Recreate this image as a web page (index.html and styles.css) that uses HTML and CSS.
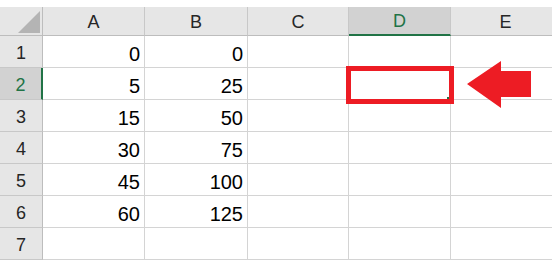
FILE: index.html
```html
<!DOCTYPE html>
<html lang="en">
<head>
  <meta charset="UTF-8">
  <title>Sheet</title>
  <link rel="stylesheet" href="styles.css">
</head>
<body>
  <div class="sheet">
    <div class="grid">
      <div class="corner"><span class="tri"></span></div>
      <div class="colhead">A</div>
      <div class="colhead">B</div>
      <div class="colhead">C</div>
      <div class="colhead sel">D</div>
      <div class="colhead">E</div>

      <div class="rowhead">1</div>
      <div class="cell">0</div><div class="cell">0</div><div class="cell"></div><div class="cell"></div><div class="cell"></div>

      <div class="rowhead sel">2</div>
      <div class="cell">5</div><div class="cell">25</div><div class="cell"></div><div class="cell"></div><div class="cell"></div>

      <div class="rowhead">3</div>
      <div class="cell">15</div><div class="cell">50</div><div class="cell"></div><div class="cell"></div><div class="cell"></div>

      <div class="rowhead">4</div>
      <div class="cell">30</div><div class="cell">75</div><div class="cell"></div><div class="cell"></div><div class="cell"></div>

      <div class="rowhead">5</div>
      <div class="cell">45</div><div class="cell">100</div><div class="cell"></div><div class="cell"></div><div class="cell"></div>

      <div class="rowhead">6</div>
      <div class="cell">60</div><div class="cell">125</div><div class="cell"></div><div class="cell"></div><div class="cell"></div>

      <div class="rowhead">7</div>
      <div class="cell"></div><div class="cell"></div><div class="cell"></div><div class="cell"></div><div class="cell"></div>
    </div>

    <!-- highlight on D2 -->
    <div class="mark"><span class="handle"></span></div>
    <svg class="arrow" width="66" height="48" viewBox="0 0 66 48">
      <polygon points="0,23 34,0 34,10 64,10 64,36 34,36 34,47" fill="#ed1c24"/>
    </svg>
  </div>
</body>
</html>
```

FILE: styles.css
```css
body {
  margin: 0;
  background: #ffffff;
  font-family: "Liberation Sans", Arial, sans-serif;
}

.sheet {
  position: relative;
  width: 552px;
  height: 263px;
  overflow: hidden;
  padding-top: 7px;
  box-sizing: border-box;
}

.grid {
  display: grid;
  grid-template-columns: 43px 102px 103px 101px 102px 110px;
  grid-template-rows: 29px repeat(7, 32px);
}

.corner,
.colhead,
.rowhead {
  background: #e6e6e6;
  color: #262626;
  font-size: 18px;
  box-sizing: border-box;
  display: flex;
  justify-content: center;
}

.corner {
  border-right: 1px solid #bdbdbd;
  border-bottom: 1px solid #bdbdbd;
  position: relative;
}

.tri {
  position: absolute;
  right: 2px;
  bottom: 2px;
  width: 0;
  height: 0;
  border-left: 22px solid transparent;
  border-bottom: 22px solid #b4b4b4;
}

.colhead {
  align-items: center;
  padding-top: 2px;
  border-right: 1px solid #c8c8c8;
  border-bottom: 1px solid #bdbdbd;
}

.colhead.sel {
  background: #d2d2d2;
  color: #217346;
  border-bottom: 2px solid #217346;
}

.rowhead {
  align-items: center;
  padding-top: 4px;
  border-right: 1px solid #bdbdbd;
  border-bottom: 1px solid #c8c8c8;
}

.rowhead.sel {
  background: #d2d2d2;
  color: #217346;
  border-right: 2px solid #217346;
}

.cell {
  box-sizing: border-box;
  border-right: 1px solid #d4d4d4;
  border-bottom: 1px solid #d4d4d4;
  font-size: 20px;
  color: #000000;
  text-align: right;
  padding: 8px 4px 0 0;
  line-height: 21px;
}

.mark {
  position: absolute;
  left: 346px;
  top: 66px;
  width: 108px;
  height: 38px;
  box-sizing: border-box;
  border: 5px solid #ed1c24;
}

.handle {
  position: absolute;
  right: 0;
  bottom: 0;
  width: 2px;
  height: 2px;
  background: #217346;
}

.arrow {
  position: absolute;
  left: 467px;
  top: 61px;
}
```
